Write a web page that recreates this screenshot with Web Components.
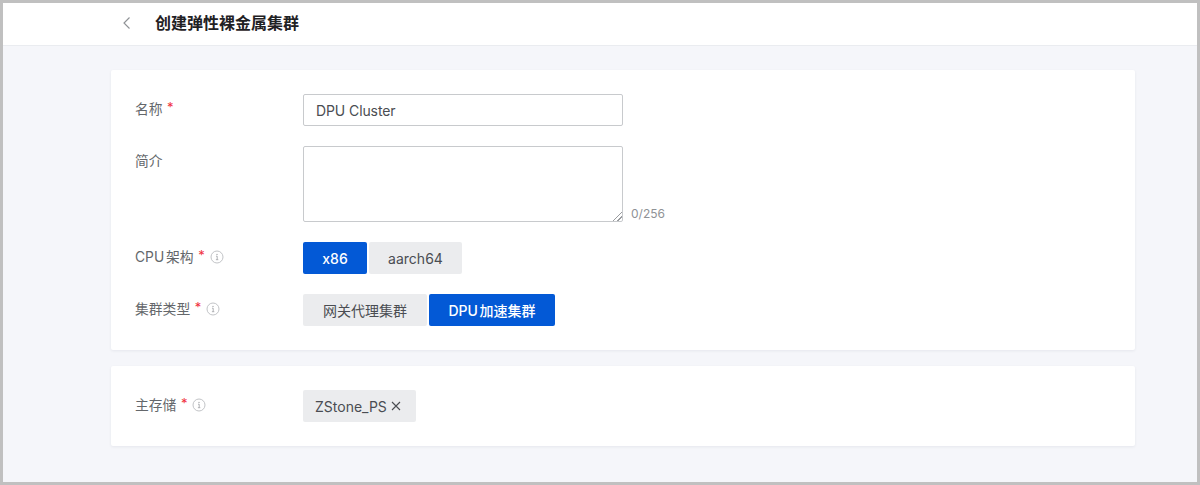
<!DOCTYPE html>
<html lang="zh-CN">
<head>
<meta charset="utf-8">
<title>创建弹性裸金属集群</title>
<style>
html,body{margin:0;padding:0;height:100%;}
body{font-family:Inter,"Noto Sans CJK SC",sans-serif;font-size:14px;color:#2e3033;}
</style>
</head>
<body>
<app-frame>
  <page-header slot="header" title-text="创建弹性裸金属集群"></page-header>
  <form-card>
    <form-row label="名称" required><text-field>DPU Cluster</text-field></form-row>
    <form-row label="简介" tall><text-box max="256"></text-box></form-row>
    <form-row label="CPU 架构" required info>
      <seg-group><seg-button active width="64">x86</seg-button><seg-button width="93">aarch64</seg-button></seg-group>
    </form-row>
    <form-row label="集群类型" required info>
      <seg-group><seg-button width="124">网关代理集群</seg-button><seg-button active width="126">DPU 加速集群</seg-button></seg-group>
    </form-row>
  </form-card>
  <form-card>
    <form-row label="主存储" required info><tag-chip>ZStone_PS</tag-chip></form-row>
  </form-card>
</app-frame>
<script>
function def(name, html, init){
  customElements.define(name, class extends HTMLElement{
    connectedCallback(){
      if(this.shadowRoot) return;
      const r=this.attachShadow({mode:'open'});
      r.innerHTML=html;
      if(init) init.call(this,r);
    }
  });
}
def('app-frame',`<style>
:host{display:flex;flex-direction:column;box-sizing:border-box;width:1200px;height:485px;border:3px solid #c0c0c0;background:#f5f6fa;overflow:hidden;}
main{display:flex;flex-direction:column;gap:16px;padding:24px 62px 0 108px;}
</style><slot name="header"></slot><main><slot></slot></main>`);
def('page-header',`<style>
:host{display:flex;align-items:center;box-sizing:border-box;height:43px;flex:none;background:#fff;border-bottom:1px solid #eaecf0;padding-left:118px;padding-bottom:3px;}
svg{display:block;width:12px;height:14px;margin-right:22px;}
h1{margin:0;font-size:16px;font-weight:600;color:#1f2124;line-height:24px;}
</style><svg viewBox="0 0 12 14" fill="none" stroke="#8f9296" stroke-width="1.15"><path d="M8.5 1.5 3 7l5.5 5.5"/></svg><h1></h1>`,function(r){r.querySelector('h1').textContent=this.getAttribute('title-text');});
def('form-card',`<style>
:host{display:flex;flex-direction:column;gap:20px;padding:24px;background:#fff;border-radius:2px;box-shadow:0 1px 3px rgba(30,40,70,.07);}
</style><slot></slot>`);
def('form-row',`<style>
:host{display:grid;grid-template-columns:168px 1fr;align-items:start;}
.l{display:flex;align-items:center;height:28px;color:#64676b;font-size:13.8px;white-space:nowrap;word-spacing:-2px;}
.s{color:#f03040;margin-left:4.5px;font-size:13px;line-height:14px;position:relative;top:-1px;}
info-icon{margin-left:5px;position:relative;top:1px;}
</style><div class="l"><span id="t"></span></div><div><slot></slot></div>`,function(r){
  const l=r.querySelector('.l');
  r.getElementById('t').textContent=this.getAttribute('label');
  if(this.hasAttribute('required')){const s=document.createElement('span');s.className='s';s.textContent='*';l.append(s);}
  if(this.hasAttribute('info')){l.append(document.createElement('info-icon'));}
});
def('info-icon',`<style>
:host{display:inline-flex;width:14px;height:14px;}
svg{width:14px;height:14px;display:block;}
</style><svg viewBox="0 0 14 14" fill="none"><circle cx="7" cy="7" r="6" stroke="#c2c4c7" stroke-width="1"/><path d="M6 6.2h1.2v3.4M5.9 9.7h2.4" stroke="#a6a8ac" stroke-width=".9"/><circle cx="7" cy="4.4" r=".7" fill="#a6a8ac"/></svg>`);
def('text-field',`<style>
:host{display:flex;align-items:center;box-sizing:border-box;width:320px;height:32px;padding:0 12px;border:1px solid #c8cacd;border-radius:2px;background:#fff;color:#4a4d52;font-size:14px;letter-spacing:-.1px;}
</style><slot></slot>`);
def('text-box',`<style>
:host{display:flex;align-items:flex-end;gap:8px;}
textarea{display:block;box-sizing:border-box;width:320px;height:76px;margin:0;padding:6px 12px;border:1px solid #c8cacd;border-radius:2px;outline:none;background:#fff;resize:vertical;font:inherit;}
textarea::-webkit-resizer{background:linear-gradient(135deg,transparent 0 68%,#9a9c9f 68% 73%,transparent 73% 82%,#9a9c9f 82% 87%,transparent 87%);}
span{color:#8f9296;font-size:12px;line-height:16px;}
</style><textarea></textarea><span></span>`,function(r){r.querySelector('span').textContent='0/'+this.getAttribute('max');});
def('seg-group',`<style>
:host{display:flex;gap:2px;}
</style><slot></slot>`);
def('seg-button',`<style>
:host{display:flex;align-items:center;justify-content:center;box-sizing:border-box;height:32px;border-radius:2px;background:#ebecee;color:#4a4d52;font-size:14px;white-space:nowrap;word-spacing:-2px;}
:host([active]){background:#0359d6;color:#fff;font-weight:500;}
</style><slot></slot>`,function(){this.style.width=this.getAttribute('width')+'px';});
def('tag-chip',`<style>
:host{display:inline-flex;align-items:center;box-sizing:border-box;height:32px;padding:0 15px 0 12px;gap:4px;border-radius:2px;background:#ebecee;color:#4a4d52;font-size:14px;vertical-align:top;}
svg{width:10px;height:10px;display:block;}
</style><slot></slot><svg viewBox="0 0 10 10" fill="none" stroke="#4a4d52" stroke-width="1.1"><path d="M1 1l8 8M9 1l-8 8"/></svg>`);
</script>
</body>
</html>
